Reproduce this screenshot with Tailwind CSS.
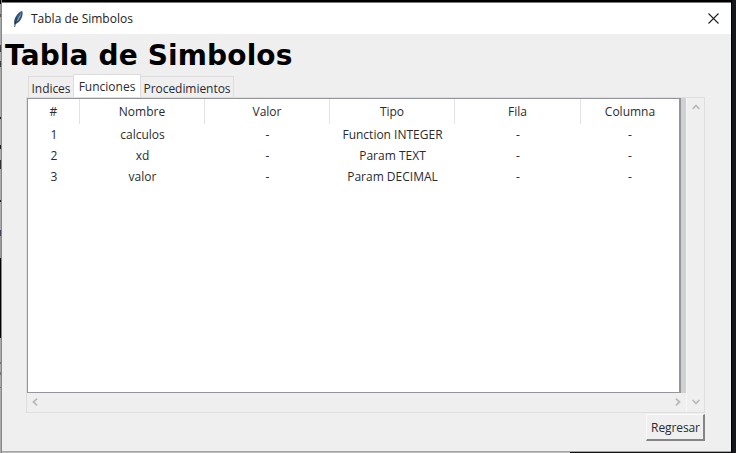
<!DOCTYPE html>
<html lang="es">
<head>
<meta charset="utf-8">
<title>Tabla de Simbolos</title>
<script src="https://cdn.jsdelivr.net/npm/@tailwindcss/browser@4"></script>
</head>
<body class="w-[736px] h-[453px] overflow-hidden bg-[#161718] font-['Open_Sans','Noto_Sans',sans-serif] text-[12px] text-[#2b2b2f]">
<div class="flex w-[736px] h-[453px]">
  <!-- strip of the window behind -->
  <div class="w-[2px] shrink-0 flex flex-col border-r border-[#888]">
    <div class="h-[4px] bg-black"></div>
    <div class="h-[10px] bg-[#999]"></div><div class="h-[3px] bg-[#555]"></div>
    <div class="h-[28px] bg-[#aaa]"></div><div class="h-[7px] bg-[#444]"></div>
    <div class="h-[9px] bg-[#aaa]"></div><div class="h-[6px] bg-[#444]"></div>
    <div class="h-[50px] bg-[#aaa]"></div><div class="h-[2px] bg-[#222]"></div>
    <div class="h-[26px] bg-[#aaa]"></div><div class="h-[4px] bg-[#222]"></div>
    <div class="h-[11px] bg-[#aaa]"></div><div class="h-[9px] bg-[#333]"></div>
    <div class="h-[31px] bg-[#aaa]"></div><div class="h-[2px] bg-[#222]"></div>
    <div class="h-[28px] bg-[#aaa]"></div><div class="h-[6px] bg-[#445]"></div>
    <div class="h-[22px] bg-[#999]"></div><div class="h-[80px] bg-black"></div>
    <div class="h-[24px] bg-[#aaa]"></div><div class="h-[2px] bg-[#777]"></div>
    <div class="h-[8px] bg-[#aaa]"></div><div class="h-[3px] bg-[#777]"></div>
    <div class="h-[12px] bg-[#aaa]"></div><div class="h-[1px] bg-[#777]"></div>
    <div class="flex-1 bg-[#aaa]"></div>
  </div>
  <div class="w-[729px] shrink-0 flex flex-col">
    <div class="h-[2px] bg-black shrink-0"></div>
    <div class="h-[450px] shrink-0 bg-[#efefef] flex flex-col border-b border-[#a5a5a5]">
      <!-- title bar -->
      <header class="h-[32px] shrink-0 bg-white border-t border-[#777] flex items-center justify-between pl-[9px] pr-[12px]">
        <div class="flex items-center">
          <svg class="w-[14px] h-[18px]" viewBox="0 0 14 18"><path d="M3.600 15C2.400 12 3.200 8 6.200 4.400 8 2.300 10 1.200 11.300 1c.8 2.400.1 5.800-1.500 8.600C8.400 12 6 13.800 4.500 14z" fill="#30506f"/><path d="M5.200 11.500C5.800 7.500 7.600 4.300 10.500 2 10.300 5.500 8.800 8.500 6 11.500z" fill="#7ba6cf"/><path d="M3.600 17C4.300 12 6.500 7 9.500 3.600" fill="none" stroke="#182431" stroke-width=".8"/></svg>
          <span class="ml-[6px] whitespace-nowrap leading-[16px] text-[#222]">Tabla de Simbolos</span>
        </div>
        <svg class="w-[11px] h-[11px]" viewBox="0 0 11 11"><path d="M.5.5l10 10M10.500.5l-10 10" stroke="#222" stroke-width="1.100"/></svg>
      </header>
      <h1 class="h-[40px] shrink-0 pl-[3px] pt-[2px] leading-[40px] whitespace-nowrap font-['DejaVu_Sans',sans-serif] font-bold text-[28px] tracking-[0.14px] text-black">Tabla de Simbolos</h1>
      <!-- tabs -->
      <nav class="h-[23px] shrink-0 pl-[26px] flex items-end leading-[16px] whitespace-nowrap">
        <div class="w-[45px] h-[21px] border-t border-l border-[#dcdcdc] pt-[4px] flex justify-center tracking-[-0.05px]">Indices</div>
        <div class="w-[68px] h-[23px] bg-white border border-b-0 border-[#dcdcdc] pt-[4px] flex justify-center">Funciones</div>
        <div class="w-[93px] h-[21px] border-t border-r border-[#dcdcdc] pt-[4px] flex justify-center tracking-[-0.05px]">Procedimientos</div>
      </nav>
      <!-- tree view and scroll bars -->
      <main class="ml-[24px] w-[679px] h-[316px] shrink-0 border border-[#dedede] flex">
        <div class="w-[659px] flex flex-col">
          <div class="h-[295px] flex">
            <div class="w-[654px] bg-white border-[#949699] border-t border-b border-l border-r-2">
              <div class="grid grid-cols-[52px_125px_125px_125px_126px_98px] h-[25px] leading-[25px] text-center whitespace-nowrap [&>div]:border-r [&>div]:border-[#e3e3e3] [&>div:last-child]:border-r-0">
                <div>#</div><div>Nombre</div><div>Valor</div><div>Tipo</div><div>Fila</div><div>Columna</div>
              </div>
              <div class="grid grid-cols-[52px_125px_125px_125px_126px_98px] auto-rows-[21px] leading-[21px] text-center whitespace-nowrap">
                <div>1</div><div>calculos</div><div>-</div><div>Function INTEGER</div><div>-</div><div>-</div>
                <div>2</div><div>xd</div><div>-</div><div>Param TEXT</div><div>-</div><div>-</div>
                <div>3</div><div>valor</div><div>-</div><div>Param DECIMAL</div><div>-</div><div>-</div>
              </div>
            </div>
            <div class="w-[5px] bg-[#d0d1d2]"></div>
          </div>
          <div class="flex-1 flex items-center justify-between pl-[5px] pr-[5px] pb-[2px]">
            <svg class="w-[6px] h-[8px]" viewBox="0 0 6 8"><path d="M5 .7L1.500 4 5 7.300" fill="none" stroke="#b9b9b9" stroke-width="1.800"/></svg>
            <svg class="w-[6px] h-[8px]" viewBox="0 0 6 8"><path d="M1 .7L4.500 4 1 7.300" fill="none" stroke="#b9b9b9" stroke-width="1.800"/></svg>
          </div>
        </div>
        <div class="flex-1 border-l border-[#f6f6f6] flex flex-col items-center justify-between pt-[6px] pb-[7px]">
          <svg class="w-[8px] h-[6px]" viewBox="0 0 8 6"><path d="M.7 5L4 1.500 7.300 5" fill="none" stroke="#b9b9b9" stroke-width="1.800"/></svg>
          <svg class="w-[8px] h-[6px]" viewBox="0 0 8 6"><path d="M.7 1L4 4.500 7.300 1" fill="none" stroke="#b9b9b9" stroke-width="1.800"/></svg>
        </div>
      </main>
      <button class="mt-px ml-[644px] w-[59px] h-[27px] shrink-0 border-t border-l border-t-[#fafafa] border-l-[#fafafa] border-r-2 border-b-2 border-r-[#858585] border-b-[#858585] leading-[25px] whitespace-nowrap flex justify-center tracking-[-0.1px] pl-px">Regresar</button>
    </div>
    <div class="flex h-[1px]"><div class="w-[568px] bg-[#bbb]"></div><div class="flex-1 bg-[#111]"></div></div>
  </div>
  <div class="flex-1 bg-[#161718] border-l border-black"></div>
</div>
</body>
</html>
